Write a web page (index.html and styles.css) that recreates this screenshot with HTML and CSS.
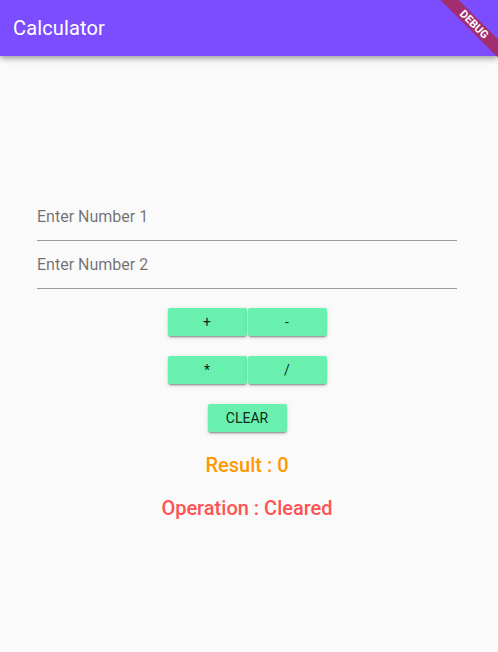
FILE: index.html
```html
<!DOCTYPE html>
<html>
<head>
<meta charset="utf-8">
<link rel="stylesheet" href="styles.css">
</head>
<body>
<header class="appbar">
  <span class="title">Calculator</span>
</header>
<div class="banner">DEBUG</div>
<main class="content">
  <div class="form">
    <div class="field"><span class="hint">Enter Number 1</span></div>
    <div class="field"><span class="hint">Enter Number 2</span></div>
    <div class="row">
      <button class="btn">+</button>
      <button class="btn">-</button>
    </div>
    <div class="row">
      <button class="btn">*</button>
      <button class="btn">/</button>
    </div>
    <div class="row">
      <button class="btn">CLEAR</button>
    </div>
    <div class="result">Result : 0</div>
    <div class="operation">Operation : Cleared</div>
  </div>
</main>
</body>
</html>
```
FILE: styles.css
```css
html, body {
  margin: 0;
  padding: 0;
}
body {
  width: 498px;
  height: 652px;
  overflow: hidden;
  position: relative;
  background: #fafafa;
  font-family: Roboto, "Liberation Sans", sans-serif;
}
.appbar {
  height: 56px;
  background: #7c4dff;
  display: flex;
  align-items: center;
  padding-left: 13px;
  box-shadow: 0 2px 4px -1px rgba(0,0,0,0.2), 0 4px 5px 0 rgba(0,0,0,0.14), 0 1px 10px 0 rgba(0,0,0,0.12);
  position: relative;
  z-index: 1;
}
.title {
  color: #fff;
  font-size: 20px;
  font-weight: 400;
  letter-spacing: 0.15px;
}
.banner {
  position: absolute;
  z-index: 2;
  left: 414px;
  top: 18px;
  width: 120px;
  height: 13px;
  line-height: 13px;
  background: rgba(183, 28, 28, 0.63);
  color: #fff;
  font-size: 11px;
  font-weight: 700;
  text-align: center;
  transform: rotate(45deg);
}
.content {
  padding-top: 137px;
}
.form {
  margin-left: 37px;
  width: 420px;
  display: flex;
  flex-direction: column;
  align-items: stretch;
}
.field {
  height: 48px;
  box-sizing: border-box;
  padding-top: 14px;
  border-bottom: 1px solid #9a9a9a;
}
.hint {
  display: block;
  font-size: 16px;
  line-height: 20px;
  color: rgba(0,0,0,0.56);
}
.row {
  display: flex;
  justify-content: center;
  gap: 1px;
  margin-top: 19px;
}
.row + .row {
  margin-top: 20px;
}
.btn {
  width: 79px;
  height: 28px;
  border: none;
  border-radius: 2px;
  background: #69f0ae;
  color: rgba(0,0,0,0.87);
  font-family: Roboto, "Liberation Sans", sans-serif;
  font-size: 14px;
  font-weight: 400;
  padding: 0;
  box-shadow: 0 3px 1px -2px rgba(0,0,0,0.2), 0 2px 2px 0 rgba(0,0,0,0.14), 0 1px 5px 0 rgba(0,0,0,0.12);
}
.result {
  margin-top: 21px;
  text-align: center;
  font-size: 20px;
  line-height: 24px;
  font-weight: 500;
  color: #ff9800;
}
.operation {
  margin-top: 19px;
  text-align: center;
  font-size: 20px;
  line-height: 24px;
  font-weight: 500;
  color: #ff5252;
}
```
